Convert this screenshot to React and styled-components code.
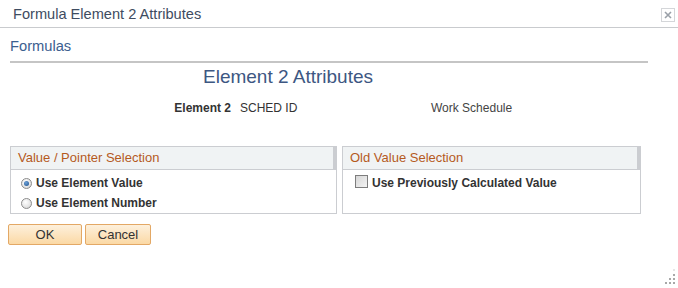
import styled, { createGlobalStyle } from "styled-components";

const GlobalStyle = createGlobalStyle`
    html, body {
        margin: 0;
        padding: 0;
        background: #ffffff;
    }
    body {
        font-family: "Liberation Sans", Arial, sans-serif;
        width: 678px;
        height: 288px;
        overflow: hidden;
    }
`;

const Dialog = styled.div`
    position: relative;
    width: 678px;
    height: 288px;
    background: #ffffff;
`;

const TitleBar = styled.div`
    display: flex;
    align-items: center;
    justify-content: space-between;
    height: 28px;
    padding: 0 3px 0 13px;
    border-bottom: 1px solid #c9cbce;
    box-sizing: border-box;
`;

const Title = styled.div`
    font-size: 14.6px;
    color: #3e4c61;
    margin-top: 1px;
`;

const CloseBox = styled.div`
    width: 12px;
    height: 12px;
    border: 1px solid #d4d6d9;
    display: flex;
    align-items: center;
    justify-content: center;
    margin-top: 2px;
`;

const Body = styled.div`
    padding: 0 30px 0 10px;
`;

const SectionTitle = styled.div`
    font-size: 14.7px;
    line-height: 16px;
    color: #3c6090;
    padding: 10px 0 7px;
    border-bottom: 2px solid #c5c5c5;
`;

const Heading = styled.div`
    font-size: 19px;
    line-height: 22px;
    color: #3d5782;
    margin: 3px 0 0 193px;
`;

const FieldRow = styled.div`
    display: flex;
    align-items: baseline;
    font-size: 12px;
    line-height: 14px;
    color: #333333;
    margin-top: 13px;
`;

const FieldLabel = styled.div`
    width: 221px;
    text-align: right;
    font-weight: bold;
    color: #333333;
`;

const FieldValue = styled.div`
    width: 191px;
    padding-left: 9px;
`;

const FieldDesc = styled.div`
    color: #444444;
`;

const Groups = styled.div`
    display: flex;
    gap: 5px;
    margin-top: 31px;
`;

const Group = styled.div`
    width: ${(p) => p.$width}px;
    height: 68px;
    border: 1px solid #cbcdd1;
    box-sizing: border-box;
`;

const GroupHeader = styled.div`
    height: 23px;
    box-sizing: border-box;
    background: #f0f3f4;
    border-bottom: 1px solid #cbcdd1;
    border-right: 3px solid #cbcdd1;
    padding: 3px 0 0 7px;
    font-size: 13px;
    color: #b55a1e;
`;

const GroupBody = styled.div`
    padding: 4px 0 0 8px;
    display: flex;
    flex-direction: column;
    gap: 2px;
`;

const Option = styled.label`
    display: flex;
    align-items: center;
    gap: 4px;
    height: 18px;
    font-size: 12px;
    font-weight: bold;
    color: #333333;
`;

const Radio = styled.span`
    width: 11px;
    height: 11px;
    border-radius: 50%;
    box-sizing: border-box;
    border: 1px solid #8c8c8c;
    background: radial-gradient(circle at 40% 35%, #ffffff 0%, #e4e4e4 60%, #c8c8c8 100%);
    display: flex;
    align-items: center;
    justify-content: center;
    margin-left: 2px;

    &::after {
        content: "";
        display: ${(p) => (p.$checked ? "block" : "none")};
        width: 5px;
        height: 5px;
        border-radius: 50%;
        background: radial-gradient(circle at 40% 35%, #6aa0d8 0%, #1f4f8a 100%);
    }
`;

const Checkbox = styled.span`
    width: 13px;
    height: 13px;
    box-sizing: border-box;
    border: 1px solid #7d7d7d;
    background: linear-gradient(135deg, #d6d6d6 0%, #f4f4f4 100%);
    margin-left: 4px;
    margin-top: -4px;
`;

const Buttons = styled.div`
    display: flex;
    gap: 3px;
    margin: 10px 0 0 -2px;
`;

const Button = styled.button`
    width: ${(p) => p.$width}px;
    height: 21px;
    border: 1px solid #e3a865;
    border-radius: 2px;
    background: linear-gradient(#fdf0dc, #fbd9a5);
    font-family: "Liberation Sans", Arial, sans-serif;
    font-size: 13px;
    color: #333333;
    padding: 0;
`;

const Grip = styled.svg`
    position: absolute;
    right: 2px;
    bottom: 3px;
`;

const App = () => {
    return (
        <>
            <GlobalStyle/>
            <Dialog>
                <TitleBar>
                    <Title>Formula Element 2 Attributes</Title>
                    <CloseBox>
                        <svg width="8" height="8" viewBox="0 0 8 8">
                            <path d="M1 1 L7 7 M7 1 L1 7" stroke="#9aa0a8" strokeWidth="1.6"/>
                        </svg>
                    </CloseBox>
                </TitleBar>
                <Body>
                    <SectionTitle>Formulas</SectionTitle>
                    <Heading>Element 2 Attributes</Heading>
                    <FieldRow>
                        <FieldLabel>Element 2</FieldLabel>
                        <FieldValue>SCHED ID</FieldValue>
                        <FieldDesc>Work Schedule</FieldDesc>
                    </FieldRow>
                    <Groups>
                        <Group $width={327}>
                            <GroupHeader>Value / Pointer Selection</GroupHeader>
                            <GroupBody>
                                <Option><Radio $checked/>Use Element Value</Option>
                                <Option><Radio/>Use Element Number</Option>
                            </GroupBody>
                        </Group>
                        <Group $width={299}>
                            <GroupHeader>Old Value Selection</GroupHeader>
                            <GroupBody>
                                <Option><Checkbox/>Use Previously Calculated Value</Option>
                            </GroupBody>
                        </Group>
                    </Groups>
                    <Buttons>
                        <Button $width={74}>OK</Button>
                        <Button $width={66}>Cancel</Button>
                    </Buttons>
                </Body>
                <Grip width="12" height="16" viewBox="0 0 12 16">
                    <rect x="9" y="0" width="2" height="2" fill="#e6e6e6"/>
                    <rect x="9" y="5" width="2" height="2" fill="#a8a8a8"/>
                    <rect x="5" y="9" width="2" height="2" fill="#a8a8a8"/>
                    <rect x="9" y="9" width="2" height="2" fill="#a8a8a8"/>
                    <rect x="1" y="13" width="2" height="2" fill="#a8a8a8"/>
                    <rect x="5" y="13" width="2" height="2" fill="#a8a8a8"/>
                    <rect x="9" y="13" width="2" height="2" fill="#a8a8a8"/>
                </Grip>
            </Dialog>
        </>
    );
};

export default App;
